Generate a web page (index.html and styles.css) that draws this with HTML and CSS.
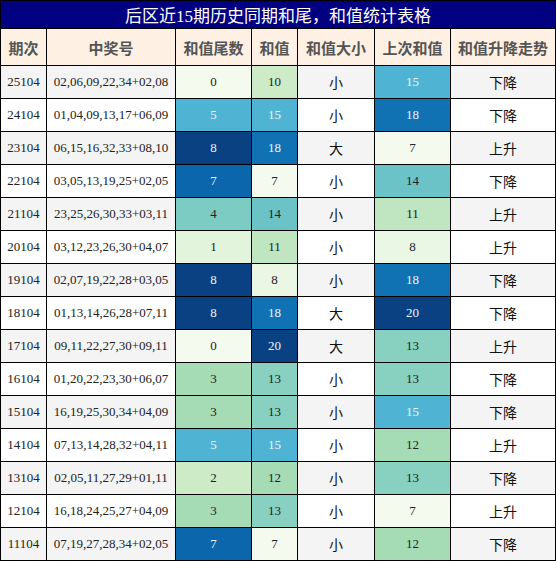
FILE: index.html
```html
<!DOCTYPE html>
<html lang="zh">

<head>
  <meta charset="UTF-8">
  <meta name="viewport" content="width=device-width, initial-scale=1.0">
  <title>后区近15期历史同期和尾，和值统计表格</title>
  <link rel="stylesheet" href="styles.css">
</head>

<body>
  <div class="sheet">
    <div class="title">后区近15期历史同期和尾，和值统计表格</div>

    <div class="row head">
      <div>期次</div>
      <div>中奖号</div>
      <div>和值尾数</div>
      <div>和值</div>
      <div>和值大小</div>
      <div>上次和值</div>
      <div>和值升降走势</div>
    </div>

    <div class="row">
      <div>25104</div><div>02,06,09,22,34+02,08</div>
      <div class="g0">0</div><div class="g2">10</div>
      <div class="zh">小</div><div class="g5">15</div><div class="zh">下降</div>
    </div>
    <div class="row">
      <div>24104</div><div>01,04,09,13,17+06,09</div>
      <div class="g5">5</div><div class="g5">15</div>
      <div class="zh">小</div><div class="g7">18</div><div class="zh">下降</div>
    </div>
    <div class="row">
      <div>23104</div><div>06,15,16,32,33+08,10</div>
      <div class="g9">8</div><div class="g7">18</div>
      <div class="zh">大</div><div class="g0">7</div><div class="zh">上升</div>
    </div>
    <div class="row">
      <div>22104</div><div>03,05,13,19,25+02,05</div>
      <div class="g8">7</div><div class="g0">7</div>
      <div class="zh">小</div><div class="g4b">14</div><div class="zh">下降</div>
    </div>
    <div class="row">
      <div>21104</div><div>23,25,26,30,33+03,11</div>
      <div class="g4">4</div><div class="g4b">14</div>
      <div class="zh">小</div><div class="g2b">11</div><div class="zh">上升</div>
    </div>
    <div class="row">
      <div>20104</div><div>03,12,23,26,30+04,07</div>
      <div class="g1">1</div><div class="g2b">11</div>
      <div class="zh">小</div><div class="g1b">8</div><div class="zh">上升</div>
    </div>
    <div class="row">
      <div>19104</div><div>02,07,19,22,28+03,05</div>
      <div class="g9">8</div><div class="g1b">8</div>
      <div class="zh">小</div><div class="g7">18</div><div class="zh">下降</div>
    </div>
    <div class="row">
      <div>18104</div><div>01,13,14,26,28+07,11</div>
      <div class="g9">8</div><div class="g7">18</div>
      <div class="zh">大</div><div class="g9">20</div><div class="zh">下降</div>
    </div>
    <div class="row">
      <div>17104</div><div>09,11,22,27,30+09,11</div>
      <div class="g0">0</div><div class="g9">20</div>
      <div class="zh">大</div><div class="g3b">13</div><div class="zh">上升</div>
    </div>
    <div class="row">
      <div>16104</div><div>01,20,22,23,30+06,07</div>
      <div class="g3">3</div><div class="g3b">13</div>
      <div class="zh">小</div><div class="g3b">13</div><div class="zh">下降</div>
    </div>
    <div class="row">
      <div>15104</div><div>16,19,25,30,34+04,09</div>
      <div class="g3">3</div><div class="g3b">13</div>
      <div class="zh">小</div><div class="g5">15</div><div class="zh">下降</div>
    </div>
    <div class="row">
      <div>14104</div><div>07,13,14,28,32+04,11</div>
      <div class="g5">5</div><div class="g5">15</div>
      <div class="zh">小</div><div class="g3">12</div><div class="zh">上升</div>
    </div>
    <div class="row">
      <div>13104</div><div>02,05,11,27,29+01,11</div>
      <div class="g2">2</div><div class="g3">12</div>
      <div class="zh">小</div><div class="g3b">13</div><div class="zh">下降</div>
    </div>
    <div class="row">
      <div>12104</div><div>16,18,24,25,27+04,09</div>
      <div class="g3">3</div><div class="g3b">13</div>
      <div class="zh">小</div><div class="g0">7</div><div class="zh">上升</div>
    </div>
    <div class="row">
      <div>11104</div><div>07,19,27,28,34+02,05</div>
      <div class="g8">7</div><div class="g0">7</div>
      <div class="zh">小</div><div class="g3">12</div><div class="zh">下降</div>
    </div>
  </div>
</body>

</html>
```

FILE: styles.css
```css
body {
  margin: 0;
  font-family: "Liberation Serif", "Noto Sans CJK SC", serif;
  color: #222;
}

.sheet {
  display: grid;
  grid-template-columns: 45px 128px 75px 45px 76px 75px 104px;
  grid-template-rows: 27px 36px;
  grid-auto-rows: 32px;
  gap: 1px;
  width: 556px;
  padding: 1px;
  box-sizing: border-box;
  background-color: #000;
}

.title {
  grid-column: 1 / -1;
  display: flex;
  align-items: center;
  justify-content: center;
  color: #fff;
  font-size: 17px;
  background-color: #000080;
}

.row {
  display: contents;
}

.row > div {
  display: flex;
  align-items: center;
  justify-content: center;
  font-size: 13px;
  background-color: #fff;
}

.row:nth-child(odd) > div {
  background-color: #f4f4f4;
}

.head > div {
  font-family: "Noto Sans CJK SC", sans-serif;
  font-size: 15px;
  font-weight: bold;
  color: #555;
}

.row.head > div {
  background-color: #fef1e3;
}

.row > .zh {
  font-family: "Noto Sans CJK SC", sans-serif;
  font-size: 14px;
  color: #111;
}

/* 色阶 */
.row > div.g0 { background-color: #f4fbee; }
.row > div.g1 { background-color: #e2f4dc; }
.row > div.g1b { background-color: #eaf7e4; }
.row > div.g2 { background-color: #cdebc6; }
.row > div.g2b { background-color: #bfe6c0; }
.row > div.g3 { background-color: #a6dcb5; }
.row > div.g3b { background-color: #88d1c1; }
.row > div.g4 { background-color: #7dccc4; }
.row > div.g4b { background-color: #6bc3c7; }
.row > div.g5 { background-color: #4fb3d3; color: #eef6fa; }
.row > div.g7 { background-color: #1071b3; color: #eef6fa; }
.row > div.g8 { background-color: #0b66ac; color: #eef6fa; }
.row > div.g9 { background-color: #0a4183; color: #eef6fa; }
```
